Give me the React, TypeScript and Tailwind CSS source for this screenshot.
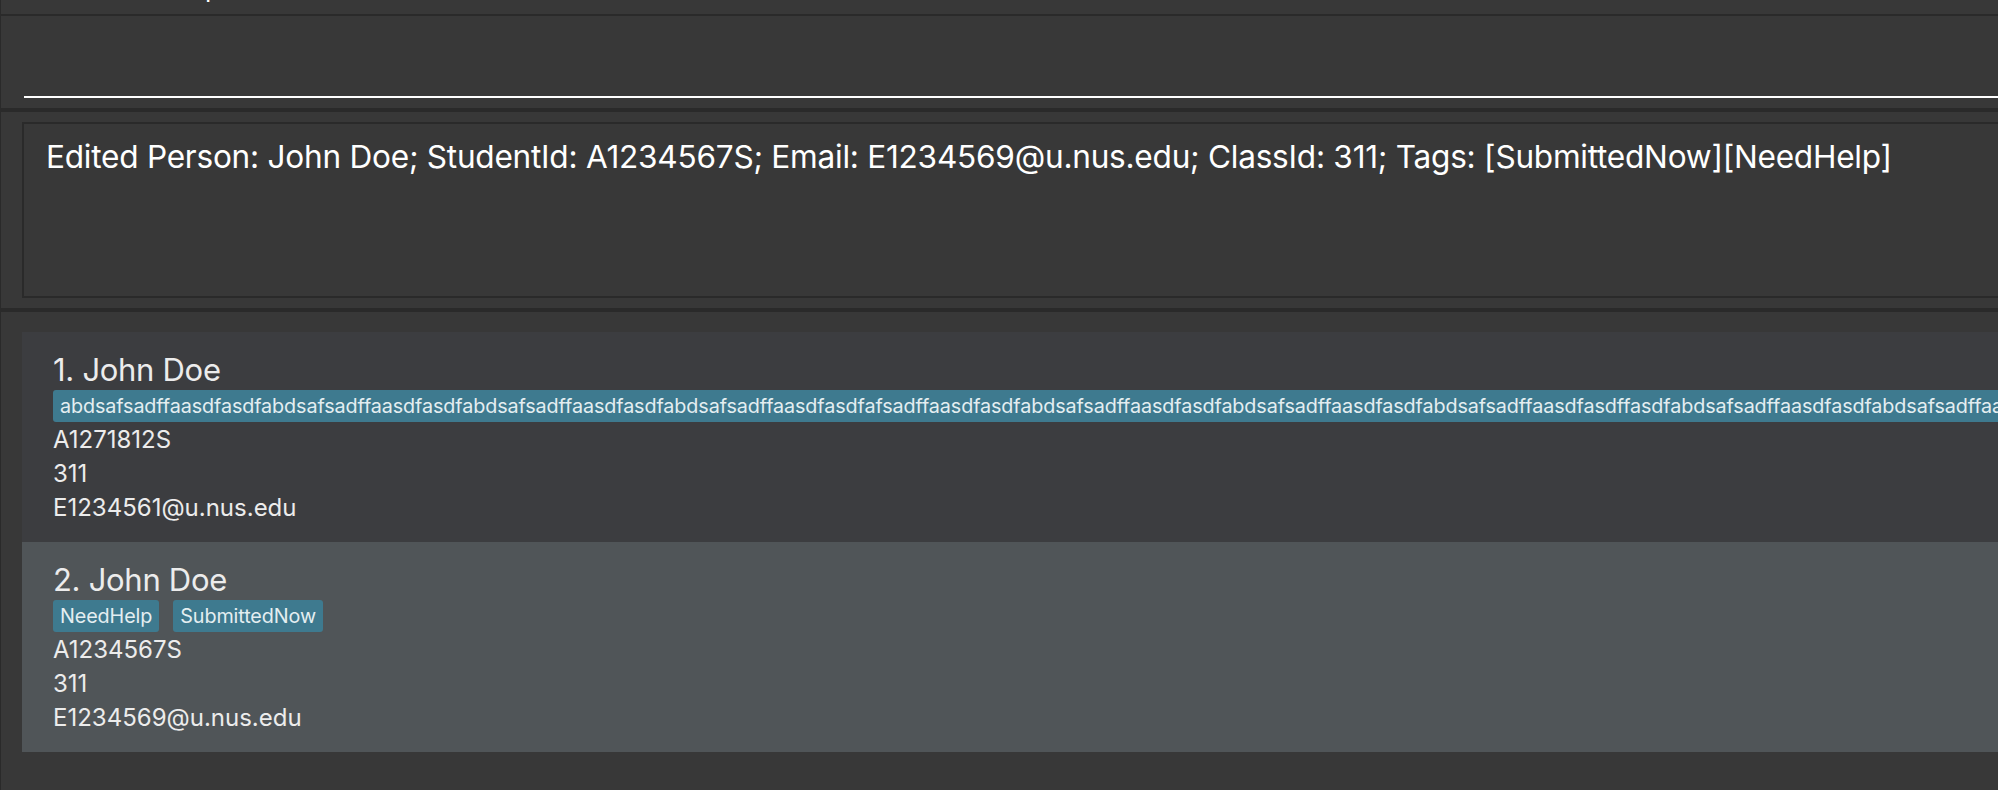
import React from "react";

interface Person {
  name: string;
  tags: string[];
  studentId: string;
  classId: string;
  email: string;
}

const LONG_TAG =
  "abdsafsadffaasdfasdfabdsafsadffaasdfasdfabdsafsadffaasdfasdfabdsafsadffaasdfasdfafsadffaasdfasdfabdsafsadffaasdfasdfabdsafsadffaasdfasdfabdsafsadffaasdfasdffasdfabdsafsadffaasdfasdfabdsafsadffaasdfasdfabdsafsadffaasdfasdf";

const persons: Person[] = [
  {
    name: "John Doe",
    tags: [LONG_TAG],
    studentId: "A1271812S",
    classId: "311",
    email: "E1234561@u.nus.edu",
  },
  {
    name: "John Doe",
    tags: ["NeedHelp", "SubmittedNow"],
    studentId: "A1234567S",
    classId: "311",
    email: "E1234569@u.nus.edu",
  },
];

function PersonCard({ person, index }: { person: Person; index: number }) {
  const bg = index % 2 === 0 ? "bg-[#3c3d40]" : "bg-[#505558]";
  return (
    <div className={`${bg} h-[210px] pl-[31px] pt-[20px] text-[#ececec] overflow-hidden`}>
      <div className="text-[31px] leading-[36px] whitespace-nowrap tracking-[-0.3px]">
        {index + 1}. {person.name}
      </div>
      <div className="flex gap-[14px] mt-[2px] h-[32px]">
        {person.tags.map((tag) => (
          <span
            key={tag}
            className="bg-[#3e7a8f] rounded-[3px] px-[7px] text-[19.75px] leading-[32px] text-[#e4eef1] whitespace-nowrap tracking-[-0.1px]"
          >
            {tag}
          </span>
        ))}
      </div>
      <div className="text-[24px] leading-[34px] mt-[1px]">{person.studentId}</div>
      <div className="text-[24px] leading-[34px]">{person.classId}</div>
      <div className="text-[24px] leading-[34px]">{person.email}</div>
    </div>
  );
}

export default function App() {
  return (
    <div
      className="w-full h-[790px] bg-[#383838] border-l border-[#2a2a2a] overflow-hidden flex flex-col"
      style={{ fontFamily: "Inter, 'Noto Sans', sans-serif" }}
    >
      {/* menu bar, mostly scrolled out of view */}
      <div className="h-[14px] overflow-hidden shrink-0">
        <div className="flex gap-[40px] pl-[80px] -mt-[25px] text-[26px] leading-[26px] text-white">
          <span>File</span>
          <span>Help</span>
        </div>
      </div>
      <div className="h-[2px] bg-[#2a2a2a] shrink-0" />

      {/* command box */}
      <div className="h-[92px] shrink-0 pl-[23px] pt-[80px]">
        <div className="h-[2px] bg-white" />
      </div>
      <div className="h-[4px] bg-[#2a2a2a] shrink-0" />

      {/* result display */}
      <div className="h-[196px] shrink-0 pl-[21px] py-[10px]">
        <div className="h-full border-[2px] border-r-0 border-[#2a2a2a] pl-[22px] pt-[13px]">
          <div className="text-[31.6px] leading-[40px] text-white whitespace-nowrap tracking-[-0.25px]">
            Edited Person: John Doe; StudentId: A1234567S; Email: E1234569@u.nus.edu; ClassId: 311; Tags: [SubmittedNow][NeedHelp]
          </div>
        </div>
      </div>
      <div className="h-[4px] bg-[#2a2a2a] shrink-0" />

      {/* person list */}
      <div className="flex-1 pl-[21px] pt-[20px]">
        {persons.map((p, i) => (
          <PersonCard key={i} person={p} index={i} />
        ))}
      </div>
    </div>
  );
}
